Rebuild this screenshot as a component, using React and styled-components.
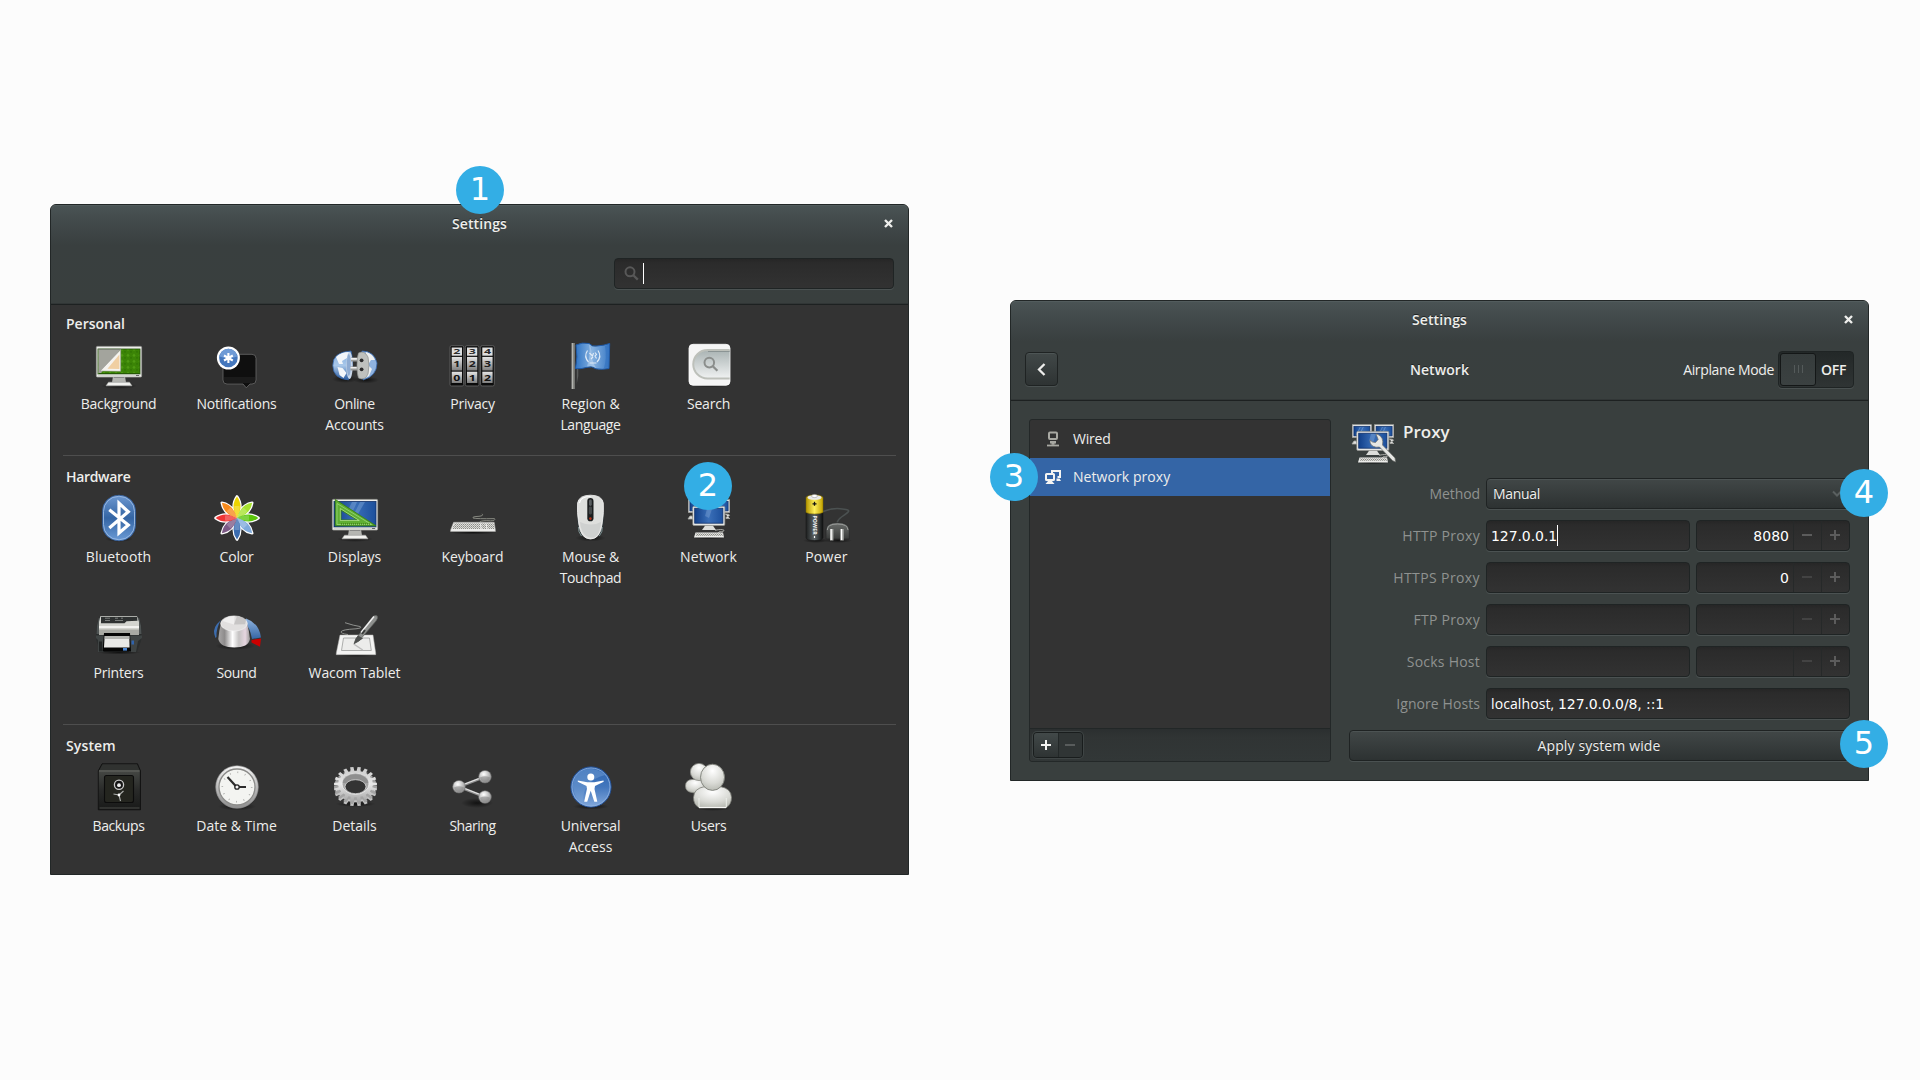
import React from 'react';
import styled, { createGlobalStyle } from 'styled-components';

const GlobalStyle = createGlobalStyle`
  * { box-sizing: border-box; }
  html, body { margin: 0; background: #fcfcfc; }
  body {
    font-family: "Open Sans", "Noto Sans", sans-serif;
    font-size: 14px;
    line-height: 21px;
    color: #eeeeec;
  }
`;

/* ---------- Desktop and windows ---------- */

const Desktop = styled.main`
  display: flex;
  align-items: flex-start;
  gap: 101px;
  width: 1920px;
  height: 1080px;
  padding: 204px 50px 0;
  overflow: hidden;
  background: #fcfcfc;
`;

const Window = styled.section`
  position: relative;
  display: flex;
  flex-direction: column;
  flex: none;
  width: 859px;
  height: ${(p) => p.$height}px;
  margin-top: ${(p) => p.$drop || 0}px;
  border: 1px solid #222727;
  border-radius: 6px 6px 0 0;
  background: ${(p) => p.$fill};
`;

const Header = styled.header`
  flex: none;
  display: flex;
  flex-direction: column;
  height: 100px;
  border-bottom: 1px solid #1d2121;
  border-radius: 5px 5px 0 0;
  background: linear-gradient(#4a5455 0, #434b4c 14px, #393f3f 40px, #393f3e 100%);
  box-shadow: inset 0 1px #525c5d, inset 0 -1px #313636;
`;

const TitleBar = styled.div`
  display: grid;
  grid-template-columns: 1fr auto 1fr;
  align-items: center;
  height: 36px;
  padding: 0 15px;
`;

const Track = styled.span`
  letter-spacing: ${(p) => p.$track || 0}px;
  white-space: pre;
`;

const TileLabel = styled(Track)`
  margin-left: -1px;
`;

const Title = styled(Track)`
  grid-column: 2;
  font-weight: 600;
  text-shadow: 0 -1px #1f2424;
`;

const CloseButton = styled.button`
  display: flex;
  justify-self: end;
  padding: 1px 0 0;
  border: 0;
  background: none;
`;

const SearchBar = styled.div`
  display: flex;
  justify-content: flex-end;
  padding: 17px 14px 0;
`;

const sunken = `
  border: 1px solid #1f2424;
  border-radius: 4px;
  background: linear-gradient(#262626, #2b2b2b 4px, #323232);
  box-shadow: 0 1px #4b5252;
`;

const SearchBox = styled.div`
  ${sunken}
  display: flex;
  align-items: center;
  gap: 4px;
  width: 280px;
  height: 31px;
  padding-left: 9px;
`;

const Caret = styled.span`
  width: 1px;
  height: 21px;
  background: #fff;
`;

/* ---------- Settings overview ---------- */

const Section = styled.section`
  height: ${(p) => p.$height}px;
  margin: 0 12px;
  padding-top: ${(p) => p.$top}px;
  border-bottom: ${(p) => (p.$last ? '0' : '1px solid #4e4e4e')};
`;

const SectionTitle = styled.h2`
  margin: 0 0 7px;
  padding-left: 3px;
  font-size: 14px;
  font-weight: 600;
  line-height: 21px;
  letter-spacing: ${(p) => p.$track || 0}px;
`;

const TileGrid = styled.div`
  display: grid;
  grid-template-columns: repeat(7, 118px);
  grid-auto-rows: 116px;
  margin-left: -3px;
`;

const Tile = styled.div`
  display: flex;
  flex-direction: column;
  align-items: center;
`;

const TileIcon = styled.svg`
  display: block;
  flex: none;
  width: 48px;
  height: 48px;
  margin-bottom: 4px;
  overflow: visible;
`;

/* ---------- Network panel ---------- */

const ToolRow = styled.div`
  display: grid;
  grid-template-columns: 1fr auto 1fr;
  align-items: center;
  height: 61px;
  padding: 3px 14px 0;
`;

const BackButton = styled.button`
  display: flex;
  align-items: center;
  justify-content: center;
  width: 33px;
  height: 34px;
  padding: 0;
  border: 1px solid #1f2323;
  border-radius: 4px;
  background: linear-gradient(#414848, #2e3333);
  box-shadow: inset 0 1px #4d5555, 0 1px #4a5151;
`;

const Airplane = styled.div`
  display: flex;
  align-items: center;
  justify-self: end;
  gap: 4px;
`;

const Switch = styled.div`
  display: flex;
  align-items: center;
  width: 76px;
  height: 37px;
  padding: 1px;
  border: 1px solid #1f2424;
  border-radius: 4px;
  background: linear-gradient(#232828, #2f3434);
  box-shadow: 0 1px #4a5151;
`;

const Knob = styled.span`
  display: flex;
  align-items: center;
  justify-content: center;
  gap: 3px;
  width: 36px;
  height: 33px;
  border: 1px solid #141717;
  border-radius: 3px;
  background: linear-gradient(#363c3c, #3b4141);
`;

const Grip = styled.i`
  width: 1px;
  height: 8px;
  background: #545a5a;
`;

const SwitchText = styled(Track)`
  flex: 1;
  padding-right: 1px;
  text-align: center;
  font-weight: 600;
`;

const Content = styled.div`
  display: flex;
  flex: 1;
  padding: 18px 18px 18px 18px;
  gap: 17px;
`;

const Sidebar = styled.aside`
  display: flex;
  flex-direction: column;
  width: 302px;
  height: 343px;
  border: 1px solid #232828;
  border-radius: 3px;
  background: #333333;
`;

const DeviceRow = styled.div`
  display: flex;
  align-items: center;
  gap: 11px;
  height: 38px;
  padding-left: 14px;
  background: ${(p) => (p.$active ? '#3465a6' : 'transparent')};
`;

const DeviceName = styled(Track)`
  margin-top: -2px;
`;

const SideTools = styled.div`
  display: flex;
  align-items: flex-start;
  height: 33px;
  margin-top: auto;
  padding: 3px 3px 0;
  border-top: 1px solid #222727;
  border-radius: 0 0 3px 3px;
  background: linear-gradient(#2b2f30, #303434 8px, #323737);
`;

const ButtonPair = styled.div`
  display: flex;
  width: 50px;
  height: 26px;
  border: 1px solid #191d1d;
  border-radius: 4px;
  overflow: hidden;
  box-shadow: 0 0 0 1px #3f4545;
`;

const PairButton = styled.button`
  display: flex;
  flex: 1;
  align-items: center;
  justify-content: center;
  padding: 0;
  border: 0;
  border-right: ${(p) => (p.$raised ? '1px solid #232828' : '0')};
  background: ${(p) => (p.$raised ? 'linear-gradient(#424949, #2e3333)' : '#303535')};
`;

const Detail = styled.div`
  display: flex;
  flex-direction: column;
  flex: none;
  width: 502px;
`;

const DetailHead = styled.div`
  display: flex;
  align-items: flex-start;
  height: 59px;
  padding-left: 1px;
`;

const ProxyTitle = styled.h3`
  margin: 1px 0 0 6px;
  font-size: 17px;
  font-weight: 600;
  line-height: 24px;
`;

const Form = styled.div`
  display: flex;
  flex-direction: column;
  gap: 11px;
`;

const FormRow = styled.div`
  display: flex;
  align-items: center;
  gap: 6px;
  height: 31px;
`;

const FieldLabel = styled(Track)`
  width: 132px;
  text-align: right;
  color: #8f9290;
`;

const Entry = styled.div`
  ${sunken}
  display: flex;
  align-items: center;
  flex: ${(p) => (p.$wide ? '1' : 'none')};
  width: ${(p) => (p.$wide ? 'auto' : '204px')};
  height: 31px;
  padding-left: 4px;
  color: #fff;
`;

const Digits = styled(Track)`
  font-family: "DejaVu Sans", sans-serif;
  padding-top: 1px;
`;

const Spin = styled.div`
  ${sunken}
  display: grid;
  grid-template-columns: 96px 28px 28px;
  width: 154px;
  height: 31px;
`;

const SpinValue = styled(Digits)`
  align-self: center;
  padding-right: 4px;
  text-align: right;
  color: #fff;
`;

const SpinButton = styled.button`
  display: flex;
  align-items: center;
  justify-content: center;
  padding: 0 2px 1px 0;
  border: 0;
  border-left: 1px solid #262929;
  background: none;
`;

const raised = `
  border: 1px solid #1f2323;
  border-radius: 4px;
  background: linear-gradient(#414747, #2d3232);
  box-shadow: inset 0 1px #4c5353, 0 1px #4a5151;
`;

const Select = styled.div`
  ${raised}
  display: flex;
  align-items: center;
  justify-content: space-between;
  flex: 1;
  height: 31px;
  padding: 0 7px 0 6px;
  text-shadow: 0 -1px #1f2424;
`;

const ApplyButton = styled.button`
  ${raised}
  flex: none;
  height: 31px;
  margin-left: 1px;
  padding: 0 1px 0 0;
  font: inherit;
  line-height: 21px;
  color: #eeeeec;
  letter-spacing: 0.13px;
  text-shadow: 0 -1px #1f2424;
`;

const Badge = styled.span`
  position: absolute;
  top: ${(p) => p.$y}px;
  left: ${(p) => p.$x}px;
  display: flex;
  align-items: center;
  justify-content: center;
  width: 48px;
  height: 48px;
  padding-bottom: 2px;
  border-radius: 50%;
  background: #33aee5;
  color: #fff;
  font-family: "DejaVu Sans", sans-serif;
  font-size: 32px;
  font-weight: 400;
  line-height: 46px;
`;

/* ---------- Shared gradients ---------- */

const DefsHolder = styled.svg`
  display: block;
  width: 0;
  height: 0;
`;

const Lin = ({ id, a, b, c, x }) => (
  <linearGradient id={id} x1="0" y1="0" x2={x ? 1 : 0} y2={x ? 0 : 1}>
    <stop offset="0" stopColor={a} />
    {c && <stop offset="0.5" stopColor={c} />}
    <stop offset="1" stopColor={b} />
  </linearGradient>
);

const SharedDefs = () => (
  <DefsHolder aria-hidden="true">
    <defs>
      <Lin id="screen" a="#12408a" c="#3a6fb8" b="#1c4f9c" x />
      <Lin id="blueFlag" a="#2f74c4" c="#86b2e0" b="#3a7ac6" x />
      <Lin id="bt" a="#6d98d0" c="#3465a4" b="#6c9bd6" />
      <linearGradient id="knob" x1="0" y1="0" x2="1" y2="0">
        <stop offset="0" stopColor="#a9a7a7" />
        <stop offset="0.2" stopColor="#8e8c8c" />
        <stop offset="0.45" stopColor="#ffffff" />
        <stop offset="0.65" stopColor="#c4c2c2" />
        <stop offset="0.85" stopColor="#e6d6e0" />
        <stop offset="1" stopColor="#9a9898" />
      </linearGradient>
      <Lin id="safe" a="#454744" c="#2a2b2a" b="#1a1b1a" />
      <Lin id="gold" a="#b39500" c="#fff05a" b="#c0a000" x />
      <Lin id="black" a="#1d1f1f" c="#5c6466" b="#0e0f0f" x />
      <Lin id="gear" a="#c9c9c9" c="#e8e8e8" b="#a8a8a8" />
      <Lin id="pill" a="#a9b3b3" b="#f0f2f2" />
      <Lin id="arc" a="#8fb4e0" b="#3465a4" />
      <Lin id="globe" a="#7fa9dc" c="#a9c8ea" b="#2c5c9f" />
      <Lin id="access" a="#2c64b0" c="#4377bd" b="#83a9dc" />
      <Lin id="rim" a="#f5f5f5" c="#bdbdbd" b="#8e8e8e" />
      <Lin id="plug" a="#6a6d6b" b="#393b3a" />
      <Lin id="drum" a="#e6e6e6" b="#7e7e7e" />
      <radialGradient id="ball" cx="0.4" cy="0.3" r="0.7">
        <stop offset="0" stopColor="#ffffff" />
        <stop offset="0.55" stopColor="#c2c2c2" />
        <stop offset="1" stopColor="#8f8f8f" />
      </radialGradient>
      <radialGradient id="person" cx="0.5" cy="0.25" r="0.8">
        <stop offset="0" stopColor="#ffffff" />
        <stop offset="0.6" stopColor="#d9dad5" />
        <stop offset="1" stopColor="#b4b6ae" />
      </radialGradient>
      <radialGradient id="shade">
        <stop offset="0" stopColor="#000" stopOpacity="0.65" />
        <stop offset="1" stopColor="#000" stopOpacity="0" />
      </radialGradient>
      <pattern id="leaf" width="6" height="6" patternUnits="userSpaceOnUse">
        <rect width="6" height="6" fill="#3b8406" />
        <path d="M3 0.6 L4.6 2.4 L3 4 L1.4 2.4Z" fill="#4e9a12" />
        <path d="M0 3.6 L1 5 L0 6Z M6 3.6 L5 5 L6 6Z" fill="#2f7403" />
      </pattern>
      <pattern id="keys" width="2" height="2" patternUnits="userSpaceOnUse">
        <rect width="2" height="2" fill="#dcdcd8" />
        <rect width="1" height="1" fill="#8a8b87" />
        <rect x="1" y="1" width="1" height="1" fill="#a5a6a2" />
      </pattern>
    </defs>
  </DefsHolder>
);

/* ---------- Tile drawings, on a 48 unit grid ---------- */

const Monitor = ({ children }) => (
  <>
    <ellipse cx="24" cy="45" rx="18" ry="3" fill="url(#shade)" />
    <path d="M18 35h12l1 6.500h-14z" fill="#b5b6b2" />
    <path d="M19 35h10l.3 2h-10.600z" fill="#77787a" />
    <path d="M13.500 41.200h21l2.500 3.600h-26z" fill="#f2f2f0" stroke="#a5a6a2" strokeWidth=".6" />
    <rect x="1.400" y="5.400" width="45.200" height="30.600" rx="1" fill="#eeeeec" stroke="#a2a39f" strokeWidth=".8" />
    {children}
    <rect x="3" y="33.600" width="42" height="1.800" fill="#d5d6d2" />
    <path d="M41 34.500h3" stroke="#666" strokeWidth="1" />
  </>
);

const Background = () => (
  <Monitor>
    <rect x="3" y="8" width="42" height="25" fill="url(#leaf)" stroke="#1f4b05" strokeWidth=".8" />
    <path d="M3.300 8.300h22.500L5.500 32.700H3.300z" fill="#a3a49d" />
    <path d="M3.300 8.300h22.500" stroke="#777" strokeWidth=".8" />
    <path d="M25.700 8.500V30.300L5.300 30z" fill="#f5f3ef" stroke="#8e8f8a" strokeWidth=".5" />
    <path d="M24.400 13.500V28L12.500 27.800z" fill="#f0cfa2" />
    <path d="M3.500 32.500h41" stroke="#255a04" />
  </Monitor>
);

const Notifications = () => (
  <>
    <path
      d="M14 13.300h25a4 4 0 0 1 4 4V39a4 4 0 0 1-4 4h-2l-3.700 3.800L30 43H14a4 4 0 0 1-4-4V17.300a4 4 0 0 1 4-4z"
      fill="#0f0f0f"
      stroke="#6b6b6b"
      strokeWidth=".8"
    />
    <path d="M11 36h31v3q0 3-3 3H14q-3 0-3-3z" fill="#1b1b1b" />
    <circle cx="15.400" cy="17" r="11.500" fill="#fff" />
    <circle cx="15.400" cy="17" r="9.300" fill="#4477bd" />
    <path d="M6.500 15.500a9 9 0 0 1 17.800 0q-9 3-17.800 0z" fill="#6f9bd6" />
    <g stroke="#fff" strokeWidth="2.100">
      <path d="M15.400 12v10M11 14.500l8.800 5M19.800 14.500l-8.800 5" />
    </g>
  </>
);

const OnlineAccounts = () => (
  <>
    <ellipse cx="14" cy="38" rx="13" ry="4" fill="url(#shade)" />
    <ellipse cx="35" cy="39" rx="13" ry="3.500" fill="url(#shade)" />
    <path d="M20 10Q1.500 11 1.800 24.500T17.500 38.800Q24 25 20 10z" fill="url(#globe)" stroke="#3564a8" strokeWidth=".8" />
    <path d="M5 16q5-5 13-5l-2 6-5 3 1 3-4 0zM6.500 26l5 1 4 5-3 5-4-3z" fill="#f3f6fa" />
    <ellipse cx="18.500" cy="24.500" rx="3.200" ry="13.500" fill="#c9d6e8" />
    <ellipse cx="17.800" cy="24" rx="2" ry="11" fill="#5d88bf" opacity=".55" />
    <path d="M20 18.600h8M19.500 27.400h8.500" stroke="#9b9c9a" strokeWidth="4" />
    <path d="M20 17.900h8M19.500 26.700h8.500" stroke="#efefef" strokeWidth="1.600" />
    <path d="M31 10q12 0 15 12 0 13-14 17z" fill="#8fb3e0" stroke="#3564a8" strokeWidth=".8" />
    <path d="M35 11q7 2 9 8l-4 0-3 5 4 4-3 7-4 2z" fill="#eef0f0" />
    <path d="M27.500 12q6-3 9.500 4 2 8 0 17-3 7-9.500 4-1.500-4-1.500-12.500t1.500-12.500z" fill="#bfc1be" stroke="#8d8f8c" strokeWidth=".7" />
    <circle cx="30.600" cy="19.300" r="1.900" fill="#2b2b2b" />
    <circle cx="30.600" cy="28.300" r="1.900" fill="#2b2b2b" />
  </>
);

const DialDigit = styled.text`
  font: 700 8.5px "Open Sans", "Noto Sans", sans-serif;
  text-anchor: middle;
`;

const Privacy = () => (
  <>
    {[['2', '1', '0'], ['3', '2', '1'], ['4', '3', '2']].map((digits, i) => (
      <g key={i} transform={`translate(${1 + i * 15.3} 0)`}>
        <rect x="0" y="4.700" width="13.700" height="40.300" rx="1.500" fill="#0b0b0b" stroke="#5c5c5c" strokeWidth="1" />
        <rect x="1.700" y="6.500" width="10.300" height="8.200" fill="#dedede" />
        <rect x="1.700" y="15.900" width="10.300" height="13.600" fill="url(#drum)" />
        <rect x="1.700" y="30.700" width="10.300" height="11.300" fill="url(#drum)" />
        {digits.map((digit, row) => (
          <DialDigit
            key={row}
            fill={['#2b2b2b', '#202020', '#111111'][row]}
            transform={`translate(6.900 ${[13.300, 26, 39.500][row]}) scale(1.450 ${row === 0 ? 0.85 : 1})`}
          >
            {digit}
          </DialDigit>
        ))}
      </g>
    ))}
  </>
);

const Region = () => (
  <>
    <path d="M11.300 27v8q-1 5-1.500 8V27z" fill="#5a5c5c" />
    <rect x="4.300" y="2" width="3.600" height="46" fill="#7c7d79" />
    <rect x="5" y="2" width="1.200" height="46" fill="#b3b4b0" />
    <path
      d="M9 4q6-3 13-1.500 3 3.500 8 2.500 7-.5 12.700-2.500l-.7 25q-7 1.500-13 .3-4-3-9-1.500-6 2-11.500 1.200Q11 16 9 4z"
      fill="url(#blueFlag)"
      stroke="#1f5aa8"
      strokeWidth="1"
    />
    <path d="M22 3q3 4 2.500 9.500T29 27q-4-3-9-1.500Q24 14 22 3z" fill="#cfe2f6" opacity=".4" />
    <path d="M38 5q2 12-1 22l4.500-.5.500-23z" fill="#2c6cbc" opacity=".5" />
    <path d="M20.500 9.500q-4 6 1 11.500M31 9.500q4 6-1 11.500M22.500 22h7" fill="none" stroke="#dfeaf6" strokeWidth="1.200" />
    <path d="M22.500 12l3 3 1-3M24 18l2-2M28 11.500l1.500 2-1.500 1.500 1.500 2.500" stroke="#e2ecf7" strokeWidth="1.100" fill="none" />
  </>
);

const Search = () => (
  <>
    <ellipse cx="24.500" cy="44" rx="22" ry="2.500" fill="url(#shade)" />
    <rect x="4" y="3.300" width="41" height="41" rx="4" fill="#f5f5f5" stroke="#fff" strokeWidth=".8" />
    <path d="M44.700 9H22.500a14 14 0 0 0 0 28.500H44.700" fill="url(#pill)" stroke="#bdc0ba" strokeWidth="2" />
    <path d="M44.700 10.500H23" stroke="#7d8787" strokeWidth="1" opacity=".7" />
    <circle cx="24.300" cy="21.600" r="4.800" fill="none" stroke="#8b8e8c" strokeWidth="2" />
    <path d="M27.800 25.200l4.600 4.500" stroke="#8b8e8c" strokeWidth="2.300" />
  </>
);

const Bluetooth = () => (
  <>
    <ellipse cx="24" cy="45" rx="14" ry="3" fill="url(#shade)" />
    <rect x="7.400" y="1.300" width="33.200" height="45.400" rx="16" fill="url(#bt)" stroke="#2f5b99" strokeWidth=".8" />
    <rect x="8.500" y="2.400" width="31" height="43.200" rx="15" fill="none" stroke="#9dbce3" strokeWidth=".9" />
    <path d="M14.300 15.800L33.300 31 24 39V9.200l9.300 8.600L14.300 34" fill="none" stroke="#fff" strokeWidth="3.200" />
  </>
);

const petals = ['#edd400', '#a6e22e', '#5cc60c', '#7faadb', '#3a6cb0', '#7d5a86', '#ef3535', '#f78a1c'];
const petalTurns = [0, 45, 90, 135, 180, 225, 270, 315];

const Color = () => (
  <>
    <g fill="#fff" stroke="#fff" strokeWidth="2.800" strokeLinejoin="round">
      {petalTurns.map((turn) => (
        <path key={turn} d="M24 24Q17.500 12 24 2.600 30.500 12 24 24z" transform={`rotate(${turn} 24 24)`} />
      ))}
    </g>
    {petalTurns.map((turn, i) => (
      <g key={turn} transform={`rotate(${turn} 24 24)`}>
        <path d="M24 24Q17 12 24 2.600 31 12 24 24z" fill={petals[i]} />
        <path d="M24 24Q20.500 17 21.500 12h5q1 5-2.500 12z" fill="#fff" opacity=".22" />
      </g>
    ))}
  </>
);

const Displays = () => (
  <Monitor>
    <rect x="3" y="7.500" width="42" height="25.500" fill="url(#screen)" stroke="#0f2f66" strokeWidth=".8" />
    <path d="M21 8h5l-4 9-4-3zM29 8h5l-7 12-3-2z" fill="#7fa6d8" opacity=".45" />
    <path d="M4.300 5.500L45 31.800H4.300zM10 16v10h16z" fill="#5fae33" fillRule="evenodd" stroke="#3c8410" strokeWidth=".9" />
    <path d="M6 9.500L40.500 30.500H6z" fill="none" stroke="#a5dc84" strokeWidth=".7" />
    <path d="M10 30h29" stroke="#2e6b08" strokeWidth="1.500" strokeDasharray=".7 1.300" />
    <path d="M9.300 14.500v12h19z" fill="none" stroke="#b7e79a" strokeWidth=".7" />
  </Monitor>
);

const Keyboard = () => (
  <>
    <ellipse cx="24" cy="38.500" rx="24" ry="2" fill="url(#shade)" />
    <path d="M33 19.800q2 2-3 2.500-7 .3-6 1.700 4 1 21.500.6 1.500 2-4 2.200-8-.6-10.500 1v2" fill="none" stroke="#85877f" strokeWidth="1" />
    <path d="M4.600 28.300h40.600l1.200 7.700v1.500H1.600V36z" fill="#ededeb" stroke="#a7a8a4" strokeWidth=".6" />
    <path d="M5.500 29.300h39l1 5.700H3.200z" fill="url(#keys)" />
    <path d="M31.500 29.500l.7 5.500M37 29.500l1 5.500" stroke="#f2f2f0" strokeWidth="1" />
  </>
);

const Mouse = () => (
  <>
    <ellipse cx="23.500" cy="44" rx="15" ry="3.500" fill="url(#shade)" />
    <path d="M10.500 20q-2 13 3 22h20q5-9 3-22z" fill="#2f3436" />
    <path d="M11.500 33q-.5 5 3 9M35.300 33q.5 5-3 9" fill="none" stroke="#7d9090" strokeWidth="1" />
    <path d="M23.500 1.200Q35 1.200 36.300 9q.8 9-1.200 21-2 15-11.600 15T11.800 30Q9.800 18 10.600 9 12 1.200 23.500 1.200z" fill="#dedfdd" stroke="#f6f6f6" strokeWidth=".8" />
    <path d="M13 28q1.500 14 10.500 15.500T34 28q-10 5-21 0z" fill="#c9cacb" opacity=".7" />
    <path d="M12.500 9q1-6.500 11-6.500" fill="none" stroke="#fff" strokeWidth="1.200" />
    <rect x="20.300" y="4" width="6.200" height="23.300" rx="3.100" fill="#1c1e1f" />
    <rect x="22" y="5.500" width="2.800" height="6.500" rx="1.400" fill="#5a5e60" />
    <rect x="21.800" y="12.500" width="3.200" height="8" rx="1.400" fill="#444748" />
    <circle cx="23.400" cy="24.600" r="1.300" fill="#b5331a" />
  </>
);

const Computers = () => (
  <>
    {[3.300, 25.500].map((x) => (
      <g key={x}>
        <rect x={x} y="5.700" width="19.200" height="12.800" fill="#e9e9e7" stroke="#a3a4a0" strokeWidth=".6" />
        <rect x={x + 1.600} y="7.300" width="16" height="9.600" fill="url(#screen)" stroke="#0f2f66" strokeWidth=".7" />
        <path d={`M${x + 8} 8l-4 8M${x + 11} 8l-4 8`} stroke="#86abd9" strokeWidth="1" opacity=".5" />
      </g>
    ))}
    <path d="M3 25h5l-1-3h-2zM40 20q6 0 4 2-4 1-3 2.500h4" fill="#e1e1df" stroke="#a7a8a4" strokeWidth=".8" />
    <ellipse cx="24" cy="43.600" rx="18" ry="2" fill="url(#shade)" />
    <rect x="7.800" y="12.400" width="32" height="19" rx="1" fill="#eeeeec" stroke="#8f908c" strokeWidth=".7" />
    <rect x="9.700" y="14.200" width="28.200" height="15" fill="url(#screen)" stroke="#0f2f66" strokeWidth=".8" />
    <path d="M22 15h5l-3 9-4-2z" fill="#8fb2dd" opacity=".35" />
    <path d="M20 31.700h8l3 4.300H17z" fill="#dddedb" />
    <path d="M30 36.300q7-1.600 9 0 1 1-5 1.600l-1 1.600" fill="none" stroke="#a7a8a4" strokeWidth="1" />
    <path d="M10.500 38.600h27.500l1 5H9z" fill="#ededeb" />
    <path d="M11.200 39.200h26.300l.5 2.800H10.500z" fill="url(#keys)" />
  </>
);

const BatteryWord = styled.text`
  font: 700 5.2px "Open Sans", "Noto Sans", sans-serif;
  letter-spacing: 0.1px;
  fill: #f3f3f3;
`;

const Power = () => (
  <>
    <ellipse cx="13" cy="46.500" rx="13" ry="2.500" fill="url(#shade)" />
    <ellipse cx="35" cy="46.500" rx="14" ry="2.500" fill="url(#shade)" />
    <path d="M20 17.500q9-3.500 17-2.800 10 .8 8.500 2.800-1 1.500-7 5.500-4 3-4.500 6" fill="none" stroke="#4b5151" strokeWidth="1.500" />
    <path d="M3 18.500h17V44q-1 2.500-8.500 2.500T3 44z" fill="url(#black)" stroke="#191a1a" strokeWidth=".6" />
    <path d="M3 3.500q1-2.500 8.500-2.500T20 3.500v15q-3 1.500-8.500 1.500T3 18.500z" fill="url(#gold)" stroke="#7d6800" strokeWidth=".5" />
    <ellipse cx="11.500" cy="3.500" rx="7" ry="2.300" fill="#e9e9e9" />
    <ellipse cx="11.500" cy="2" rx="3" ry="1.600" fill="#fff" stroke="#999" strokeWidth=".6" />
    <path d="M11.500 7.800v4M9.500 9.800h4" stroke="#111" strokeWidth="1.300" />
    <BatteryWord transform="translate(9.700 21.500) rotate(90)">POWER</BatteryWord>
    <path d="M11.500 42v2" stroke="#fff" strokeWidth="1.200" />
    <path d="M23 45V36q0-7.500 11.500-7.500T46.300 36v9z" fill="url(#plug)" stroke="#252726" strokeWidth=".7" />
    <path d="M24.300 36q0-6 10.200-6T45 36" fill="none" stroke="#9a9c9a" strokeWidth="1" />
    <path d="M28.700 35v11.500M39 35v11.500" stroke="#a9aba8" strokeWidth="3.400" />
    <path d="M28.200 35v11M38.500 35v11" stroke="#fff" strokeWidth="1.200" />
  </>
);

const Printer = () => (
  <>
    <ellipse cx="24" cy="42.500" rx="22" ry="2" fill="url(#shade)" />
    <path d="M5 6h38l3 8 .8 8-.8 9-4 11H5.500L1.500 31 1 22l1-8z" fill="#2a2d2d" />
    <path d="M3.800 8q-2.500 8-2.300 16h5V7zM44.200 8q2.500 8 2.300 16h-5V7z" fill="#4f5454" />
    <path d="M5.500 6h36.500l2 6v13H4V12z" fill="#d3d4cf" />
    <path d="M4 16h40v2H4z" fill="#f2f2f0" />
    <path d="M4 19.500h40V25H4z" fill="#a9aaa4" />
    <path d="M6 6.800h36l.5 4-11 .4-2 2H6z" fill="#2e3131" />
    <path d="M10 8.200h5M10 10.500h5M20 8.200h3M26 8.200h2M20 10.500h8" stroke="#7a7d7b" strokeWidth="1" />
    <path d="M1 25.500h8V42H3V30l-2-2z" fill="#3f4444" />
    <path d="M34 25.500h13V28l-4 3-2 11h-7z" fill="#3f4444" />
    <path d="M4 31.500h3v10H4z" fill="#202323" />
    <path d="M9 23h26l1 18.500H7.500z" fill="#050505" />
    <path d="M9.700 26h24.600l.3 11.500H9z" fill="#e9e9e7" />
    <path d="M9.700 26h24.600v3H9.700z" fill="#b5b6b2" />
    <rect x="36.500" y="30.500" width="2.500" height="4" fill="#2f63ad" />
    <rect x="28" y="38" width="4" height="2.600" fill="#4b86d2" />
  </>
);

const Sound = () => (
  <>
    <path d="M2.500 28Q-1 20 4 14l4-4Q3 18 3.500 27z" fill="#3d6dae" />
    <path d="M33 8.500Q46 13 48 27.500L39 29q-2-12-8-17z" fill="url(#arc)" />
    <path d="M38.500 30l9.500-1.500-1 8.300-8.500-4.300z" fill="#cc0000" />
    <ellipse cx="22" cy="36" rx="20" ry="4" fill="url(#shade)" />
    <path d="M8 13Q6 21 5.300 29q2 8.500 16 8.500T37 29q-1-9-3-16z" fill="url(#knob)" />
    <ellipse cx="21" cy="13.500" rx="13.300" ry="7.600" fill="#e1dfdf" stroke="#f7f7f7" strokeWidth=".6" />
    <path d="M21 14.500L24 6.300q7 1 9 4l-1 4z" fill="#b6b4b4" opacity=".6" />
    <path d="M21 14.500L9.500 11Q13 6 21.500 6z" fill="#f0efef" />
  </>
);

const Tablet = () => (
  <>
    <ellipse cx="25" cy="45" rx="21" ry="2" fill="url(#shade)" />
    <path d="M14 12.700q9 3 15 3.800 3 1.500-4 2.300-14 .7-15 3-.5 1.700 7 2.700" fill="none" stroke="#8f918e" strokeWidth="1" />
    <path d="M9 25h33l2.700 18v1.700H5.300V43z" fill="#f4f4f3" stroke="#b5b5b3" strokeWidth=".5" />
    <path d="M12.500 28h26l1.800 12.500H10.500z" fill="#ececeb" stroke="#9b9c9a" strokeWidth=".8" />
    <path d="M22.700 34l9 6" stroke="#bcbcbc" strokeWidth="1.500" />
    <path d="M23 33.800l1.800-5L41 7.500Q44 4 46.300 6q1 2-1.300 5L28 31z" fill="#8d8f8d" stroke="#595b59" strokeWidth=".7" />
    <path d="M27 25.500l5 3L28 31l-5 2.800 1.800-5z" fill="#4c4e4d" />
    <path d="M30 22.500L43 6.500" stroke="#f0f0f0" strokeWidth="1.500" />
    <path d="M31 24l3-4" stroke="#3b3d3c" strokeWidth="2" />
  </>
);

const Backups = () => (
  <>
    <path d="M7 .8h35.500l3 7v39H3.300v-39z" fill="#181918" stroke="#0f0f0f" strokeWidth=".8" />
    <path d="M7.500 1.300h34.500l2.800 6.400H4z" fill="#303230" />
    <rect x="3.800" y="7.700" width="41" height="37.300" fill="url(#safe)" />
    <path d="M4 7.900h40.600" stroke="#73756f" strokeWidth=".9" />
    <path d="M4.500 45h40" stroke="#4a4c49" strokeWidth="1" />
    <rect x="9.500" y="12.500" width="29" height="27" rx="2" fill="#24251f" stroke="#0c0c0c" strokeWidth="1.100" />
    <circle cx="24" cy="21.700" r="4.600" fill="#141414" stroke="#c9c9c9" strokeWidth="1.300" />
    <circle cx="24" cy="22.200" r="1.900" fill="#f0f0f0" />
    <path d="M24 32l-5.500-1M24 32l4.500-4M24 32l1.500 6" stroke="#aeb0ae" strokeWidth="1.100" />
    <circle cx="24" cy="32" r="1.400" fill="#fff" />
  </>
);

const Clock = () => (
  <>
    <ellipse cx="24" cy="43.500" rx="19" ry="4" fill="url(#shade)" />
    <circle cx="24" cy="24" r="21.300" fill="url(#rim)" stroke="#8c8c8c" strokeWidth=".6" />
    <circle cx="24" cy="24" r="18" fill="#f3f4f1" stroke="#8b8b89" strokeWidth="1.300" />
    <circle cx="24" cy="24" r="14.700" fill="none" stroke="#a5a5a3" strokeWidth="1.600" strokeDasharray=".8 6.897" />
    <path d="M22.500 22.800l-8-8.800" stroke="#2c2c2c" strokeWidth="2.200" />
    <path d="M25.500 24h7.500" stroke="#2c2c2c" strokeWidth="2" />
    <circle cx="24" cy="24" r="2.200" fill="#f3f3f3" stroke="#222" strokeWidth="1.300" />
  </>
);

const Gear = () => {
  const teeth = Array.from({ length: 18 }, (_, i) => {
    const at = (deg, rx, ry) => {
      const r = (deg * Math.PI) / 180;
      return `${(24.5 + rx * Math.cos(r)).toFixed(2)} ${(21 + ry * Math.sin(r)).toFixed(2)}`;
    };
    const a = i * 20;
    return `${i ? 'L' : 'M'}${at(a - 6, 17.3, 13.3)} L${at(a - 4.5, 21.5, 17.2)} L${at(a + 4.5, 21.5, 17.2)} L${at(a + 6, 17.3, 13.3)}`;
  }).join(' ');
  return (
    <>
      <ellipse cx="24.500" cy="41" rx="20" ry="3" fill="url(#shade)" />
      <path d={`${teeth}z`} transform="translate(0 5)" fill="#c2c2c2" />
      <path d={`${teeth}z`} transform="translate(0 3)" fill="#a4a4a4" />
      <path d={`${teeth}z`} fill="url(#gear)" />
      <ellipse cx="24.500" cy="21" rx="13.500" ry="10.300" fill="#a5a5a5" stroke="#f1f1f1" strokeWidth=".8" />
      <path d="M11.500 20a13 9.500 0 0 1 26 0z" fill="#808080" opacity=".6" />
      <ellipse cx="24.500" cy="23.700" rx="10.500" ry="7" fill="#333333" stroke="#e6e6e6" strokeWidth=".7" />
    </>
  );
};

const Sharing = () => (
  <>
    <ellipse cx="28" cy="40" rx="16" ry="5" fill="url(#shade)" />
    <path d="M10 23.700l26-10M10 23.700L36 34" stroke="#8f8f8f" strokeWidth="2.600" />
    <path d="M10 23.200l26-10M10 23.200L36 33.500" stroke="#e6e6e6" strokeWidth="1.100" />
    {[[10, 23.7], [36, 13.7], [36, 34]].map(([x, y]) => (
      <g key={`${x}-${y}`}>
        <circle cx={x} cy={y} r="6.300" fill="url(#ball)" stroke="#6f6f6f" strokeWidth=".6" />
        <path d={`M${x - 5} ${y + 0.8}q5 -2.500 10 0q-1 4.500 -5 4.500t-5 -4.500z`} fill="#858585" opacity=".55" />
      </g>
    ))}
  </>
);

const Universal = () => (
  <>
    <ellipse cx="24" cy="43.500" rx="18" ry="3" fill="url(#shade)" />
    <circle cx="24" cy="24" r="20.100" fill="url(#access)" stroke="#23529a" strokeWidth="1" />
    <circle cx="24" cy="24" r="19" fill="none" stroke="#8db0df" strokeWidth=".9" />
    <path d="M16 40Q15 18 38 12 30 4.500 20 6 6 9.500 6 24q1 11 10 16z" fill="#7ba3d8" opacity=".45" />
    <circle cx="23.800" cy="14" r="3.500" fill="#fff" />
    <path d="M10.800 17.500l9.500 1.700h7l9.200-1.700.2 1.300-8.700 4.200-.5 3 2.800 12.700h-3l-3.600-11-3.500 11h-3L19.900 26l-.4-3-8.700-4.200z" fill="#fff" />
  </>
);

const Users = () => (
  <>
    <ellipse cx="28" cy="45" rx="19" ry="3" fill="url(#shade)" />
    <path d="M7 16.500h13v13.200H8Q.5 29 .5 23T7 16.500z" fill="url(#person)" stroke="#8b8d86" strokeWidth=".8" />
    <circle cx="14" cy="9" r="8.600" fill="url(#person)" stroke="#8b8d86" strokeWidth=".8" />
    <path d="M20 23.500h15q11.500 2 11.500 11 0 7-5.500 10.300H14Q8.500 41.500 8.500 34.500q0-9 11.500-11z" fill="url(#person)" stroke="#7d7f78" strokeWidth=".8" />
    <path d="M14 44V35M41.300 44V35" stroke="#eceee9" strokeWidth="1" />
    <path d="M14 44.500h27.300" stroke="#f6f6f4" strokeWidth="1.200" />
    <ellipse cx="27.500" cy="14.300" rx="12" ry="13.100" fill="url(#person)" stroke="#7d7f78" strokeWidth=".9" />
  </>
);

const Wrench = () => (
  <path
    d="M21 21q-.5 6 6 7.200l3.500-.2L43.500 41.500l3 1.500-.5-4L33.500 26q1.500-7.500-4.500-10.500l-2-.5 2.200 5.500-2.700 3-3-.5z"
    fill="#e6e7e4"
    stroke="#6d6f6c"
    strokeWidth=".7"
  />
);

/* ---------- Data ---------- */

const sections = [
  {
    title: 'Personal', track: 0, height: 151, top: 8,
    tiles: [
      { Icon: Background, lines: [['Background', -0.28]] },
      { Icon: Notifications, lines: [['Notifications', -0.17]] },
      { Icon: OnlineAccounts, lines: [['Online', -0.45], ['Accounts', -0.12]] },
      { Icon: Privacy, lines: [['Privacy', -0.24]] },
      { Icon: Region, lines: [['Region &', -0.04], ['Language', -0.36]] },
      { Icon: Search, lines: [['Search', -0.21]] },
    ],
  },
  {
    title: 'Hardware', track: -0.33, height: 269, top: 10,
    tiles: [
      { Icon: Bluetooth, lines: [['Bluetooth', 0.11]] },
      { Icon: Color, lines: [['Color', -0.22]] },
      { Icon: Displays, lines: [['Displays', -0.08]] },
      { Icon: Keyboard, lines: [['Keyboard', -0.09]] },
      { Icon: Mouse, lines: [['Mouse &', -0.13], ['Touchpad', -0.44]] },
      { Icon: Computers, lines: [['Network', 0.15]] },
      { Icon: Power, lines: [['Power', 0.29]] },
      { Icon: Printer, lines: [['Printers', -0.16]] },
      { Icon: Sound, lines: [['Sound', -0.32]] },
      { Icon: Tablet, lines: [['Wacom Tablet', -0.08]] },
    ],
  },
  {
    title: 'System', track: 0.14, height: 149, top: 10, last: true,
    tiles: [
      { Icon: Backups, lines: [['Backups', -0.39]] },
      { Icon: Clock, lines: [['Date & Time', 0.02]] },
      { Icon: Gear, lines: [['Details', -0.03]] },
      { Icon: Sharing, lines: [['Sharing', -0.48]] },
      { Icon: Universal, lines: [['Universal', -0.13], ['Access', 0.04]] },
      { Icon: Users, lines: [['Users', -0.29]] },
    ],
  },
];

const hosts = [
  { label: 'HTTP Proxy', track: 0.3, host: '127.0.0.1', port: '8080', canLower: true, caret: true },
  { label: 'HTTPS Proxy', track: 0.4, host: '', port: '0' },
  { label: 'FTP Proxy', track: 0.3, host: '', port: '' },
  { label: 'Socks Host', track: 0.24, host: '', port: '' },
];

/* ---------- Small glyphs ---------- */

const CloseGlyph = () => (
  <svg width="9" height="9" viewBox="0 0 9 9">
    <path d="M1 1l7 7M8 1L1 8" stroke="#eeeeec" strokeWidth="2.400" />
  </svg>
);

const Magnifier = () => (
  <svg width="15" height="15" viewBox="0 0 15 15" fill="none" stroke="#585858">
    <circle cx="6" cy="5.800" r="4.500" strokeWidth="2" />
    <path d="M9.300 9.200l4.500 4.400" strokeWidth="2.300" />
  </svg>
);

const Plus = ({ color, size = 10 }) => (
  <svg width={size} height={size} viewBox="0 0 10 10">
    <path d="M0 5h10M5 0v10" stroke={color} strokeWidth="2" />
  </svg>
);

const Minus = ({ color }) => (
  <svg width="10" height="10" viewBox="0 0 10 10">
    <path d="M0 5h10" stroke={color} strokeWidth="2" />
  </svg>
);

const WiredGlyph = () => (
  <svg width="18" height="16" viewBox="0 0 18 16">
    <rect x="5" y="1.500" width="8" height="6.500" rx="1" fill="none" stroke="#a9a9a3" strokeWidth="2" />
    <path d="M6 10h6v2.500h-1.500v1.200h-3v-1.200H6z" fill="#a9a9a3" />
    <path d="M3 14.500h12" stroke="#a9a9a3" strokeWidth="1.800" />
  </svg>
);

const ProxyGlyph = () => (
  <svg width="18" height="16" viewBox="0 0 18 16">
    <path d="M8 4V2h8v6h-2.500" fill="none" stroke="#f4f4f2" strokeWidth="2" />
    <path d="M12.500 9.500h3l1.500 2.500h-4.500z" fill="#f4f4f2" />
    <rect x="2" y="5" width="8" height="6" rx=".6" fill="none" stroke="#f4f4f2" strokeWidth="2" />
    <path d="M4 12h4l2.500 3h-9z" fill="#f4f4f2" />
  </svg>
);

const TitleRow = () => (
  <TitleBar>
    <Title $track={0.09}>Settings</Title>
    <CloseButton aria-label="Close"><CloseGlyph /></CloseButton>
  </TitleBar>
);

const SettingsWindow = () => (
  <Window $height={671} $fill="#333333">
    <Header>
      <TitleRow />
      <SearchBar>
        <SearchBox>
          <Magnifier />
          <Caret />
        </SearchBox>
      </SearchBar>
    </Header>
    {sections.map((s) => (
      <Section key={s.title} $height={s.height} $top={s.top} $last={s.last}>
        <SectionTitle $track={s.track}>{s.title}</SectionTitle>
        <TileGrid>
          {s.tiles.map(({ Icon, lines }) => (
            <Tile key={lines[0][0]}>
              <TileIcon viewBox="0 0 48 48"><Icon /></TileIcon>
              {lines.map(([text, track]) => <TileLabel key={text} $track={track}>{text}</TileLabel>)}
            </Tile>
          ))}
        </TileGrid>
      </Section>
    ))}
    <Badge $x={405} $y={-39}>1</Badge>
    <Badge $x={633} $y={257}>2</Badge>
  </Window>
);

const NetworkWindow = () => (
  <Window $height={481} $drop={96} $fill="#393f3e">
    <Header>
      <TitleRow />
      <ToolRow>
        <BackButton aria-label="Back">
          <svg width="9" height="13" viewBox="0 0 9 13">
            <path d="M7.500 1L2 6.500 7.500 12" fill="none" stroke="#eeeeec" strokeWidth="2.300" />
          </svg>
        </BackButton>
        <Title $track={0.07}>Network</Title>
        <Airplane>
          <Track $track={-0.36}>Airplane Mode</Track>
          <Switch>
            <Knob><Grip /><Grip /><Grip /></Knob>
            <SwitchText $track={-0.24}>OFF</SwitchText>
          </Switch>
        </Airplane>
      </ToolRow>
    </Header>
    <Content>
      <Sidebar>
        <DeviceRow>
          <WiredGlyph />
          <DeviceName $track={-0.19}>Wired</DeviceName>
        </DeviceRow>
        <DeviceRow $active>
          <ProxyGlyph />
          <DeviceName $track={0.07}>Network proxy</DeviceName>
        </DeviceRow>
        <SideTools>
          <ButtonPair>
            <PairButton $raised aria-label="Add"><Plus color="#f4f4f2" /></PairButton>
            <PairButton aria-label="Remove"><Minus color="#585c5c" /></PairButton>
          </ButtonPair>
        </SideTools>
      </Sidebar>
      <Detail>
        <DetailHead>
          <TileIcon viewBox="0 0 48 48"><Computers /><Wrench /></TileIcon>
          <ProxyTitle>Proxy</ProxyTitle>
        </DetailHead>
        <Form>
          <FormRow>
            <FieldLabel $track={-0.09}>Method</FieldLabel>
            <Select>
              <Track $track={-0.32}>Manual</Track>
              <svg width="10" height="8" viewBox="0 0 10 8">
                <path d="M1 1.500l4 4 4-4" fill="none" stroke="#5a6060" strokeWidth="2" />
              </svg>
            </Select>
          </FormRow>
          {hosts.map((h) => (
            <FormRow key={h.label}>
              <FieldLabel $track={h.track}>{h.label}</FieldLabel>
              <Entry>
                <Digits $track={-0.08}>{h.host}</Digits>
                {h.caret && <Caret />}
              </Entry>
              <Spin>
                <SpinValue>{h.port}</SpinValue>
                <SpinButton aria-label="Lower"><Minus color={h.canLower ? '#5c5c5c' : '#434343'} /></SpinButton>
                <SpinButton aria-label="Raise"><Plus color="#5c5c5c" /></SpinButton>
              </Spin>
            </FormRow>
          ))}
          <FormRow>
            <FieldLabel $track={0.08}>Ignore Hosts</FieldLabel>
            <Entry $wide>
              <Track $track={0.1}>{'localhost, '}</Track>
              <Digits $track={-0.1}>127.0.0.0/8, ::1</Digits>
            </Entry>
          </FormRow>
          <ApplyButton>Apply system wide</ApplyButton>
        </Form>
      </Detail>
    </Content>
    <Badge $x={-21} $y={152}>3</Badge>
    <Badge $x={829} $y={168}>4</Badge>
    <Badge $x={829} $y={419}>5</Badge>
  </Window>
);

export default function App() {
  return (
    <>
      <GlobalStyle />
      <Desktop>
        <SettingsWindow />
        <NetworkWindow />
      </Desktop>
      <SharedDefs />
    </>
  );
}
